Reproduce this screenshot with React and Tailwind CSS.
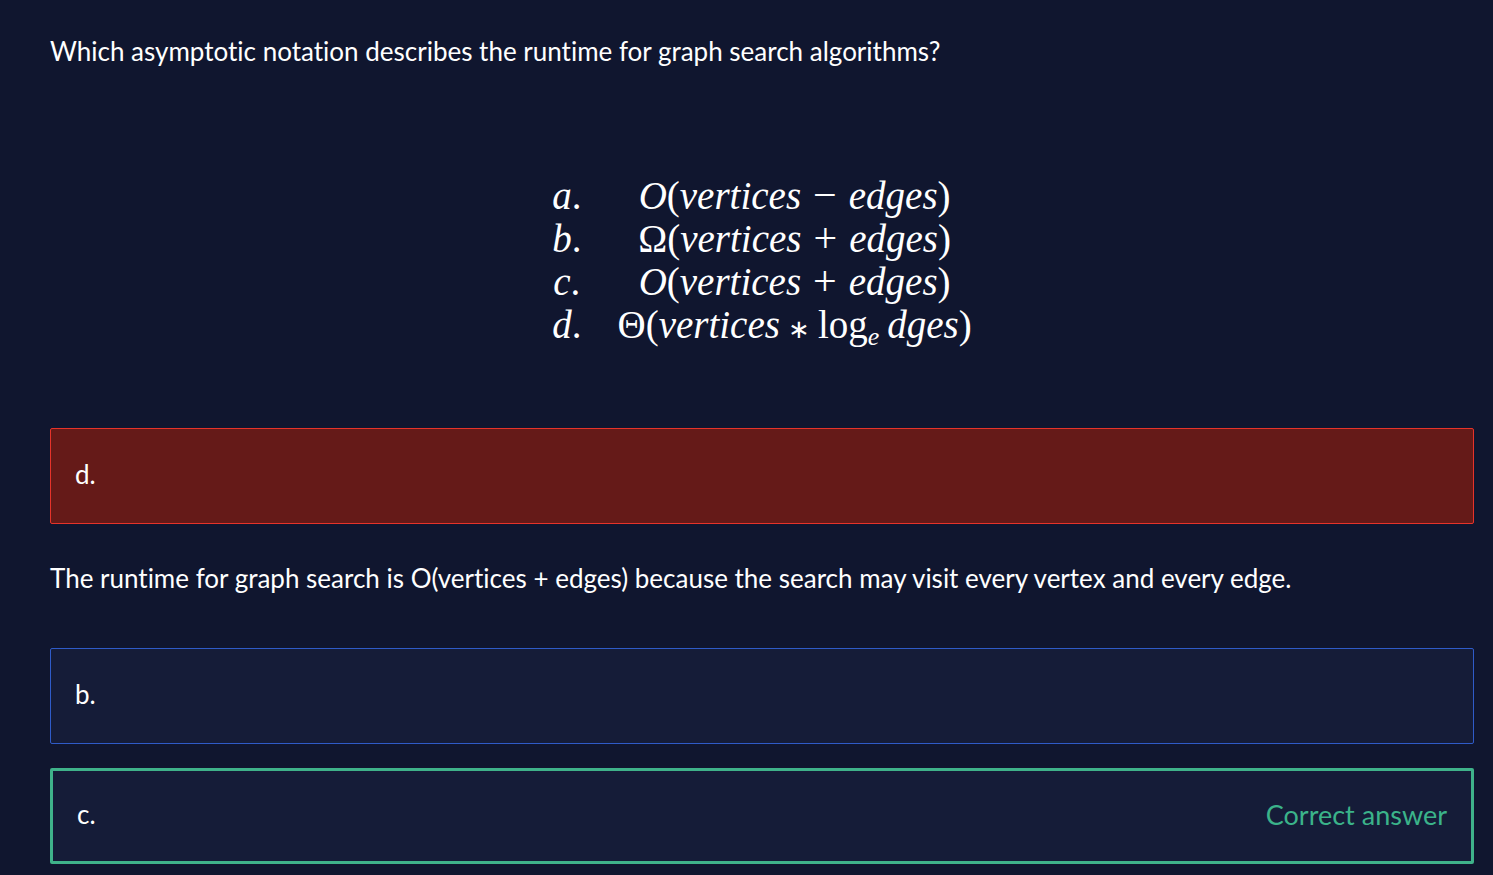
import React from 'react';

const rows = [
  { label: 'a', symbol: 'O', upright: false, op: '−' },
  { label: 'b', symbol: 'Ω', upright: true, op: '+' },
  { label: 'c', symbol: 'O', upright: false, op: '+' },
  { label: 'd', symbol: 'Θ', upright: true, op: '∗' },
];

function Formula({ row }) {
  return (
    <span className="whitespace-nowrap">
      <span className={row.upright ? '' : 'italic'}>{row.symbol}</span>(<i>vertices</i>
      <span className={row.op === '∗' ? 'mx-2 text-[26px] leading-none' : 'mx-3 text-[42px] leading-none'}>{row.op}</span>
      {row.label === 'd' ? (
        <>log<sub className="mr-2 text-[26px] italic leading-none">e</sub><i>dges</i></>
      ) : (
        <i>edges</i>
      )}
      )
    </span>
  );
}

export default function App() {
  return (
    <main className="min-h-screen bg-[#10162f] pt-8 pr-[19px] pb-3 pl-[50px] font-['Lato','Liberation_Sans',sans-serif] text-[26px] leading-[39px] text-white [font-variant-ligatures:none]">
      <p>Which asymptotic notation describes the runtime for graph search algorithms?</p>
      <div className="mt-[103px] flex justify-center font-['Liberation_Serif',serif] text-[39px]">
        <div className="grid auto-rows-[43px] grid-cols-[auto_auto] gap-x-9 text-center leading-[44px]">
          {rows.map((row) => (
            <React.Fragment key={row.label}>
              <span><i>{row.label}</i>.</span>
              <Formula row={row} />
            </React.Fragment>
          ))}
        </div>
      </div>
      <div className="mt-[82px]">
        <button className="block h-24 w-full rounded-[2px] border border-[#e6332a] bg-[#651a18] px-6 pb-1 text-left">d.</button>
        <p className="mt-[35px]">The runtime for graph search is O(vertices + edges) because the search may visit every vertex and every edge.</p>
        <button className="mt-[50px] block h-24 w-full rounded-[2px] border border-[#2f5bc8] bg-[#151c38] px-6 pb-1 text-left">b.</button>
        <button className="mt-6 flex h-24 w-full items-center justify-between rounded-[2px] border-3 border-[#3fb28a] bg-[#151c38] px-6 pb-1 text-left">
          <span>c.</span>
          <span className="text-[27px] text-[#3bb38a]">Correct answer</span>
        </button>
      </div>
    </main>
  );
}
